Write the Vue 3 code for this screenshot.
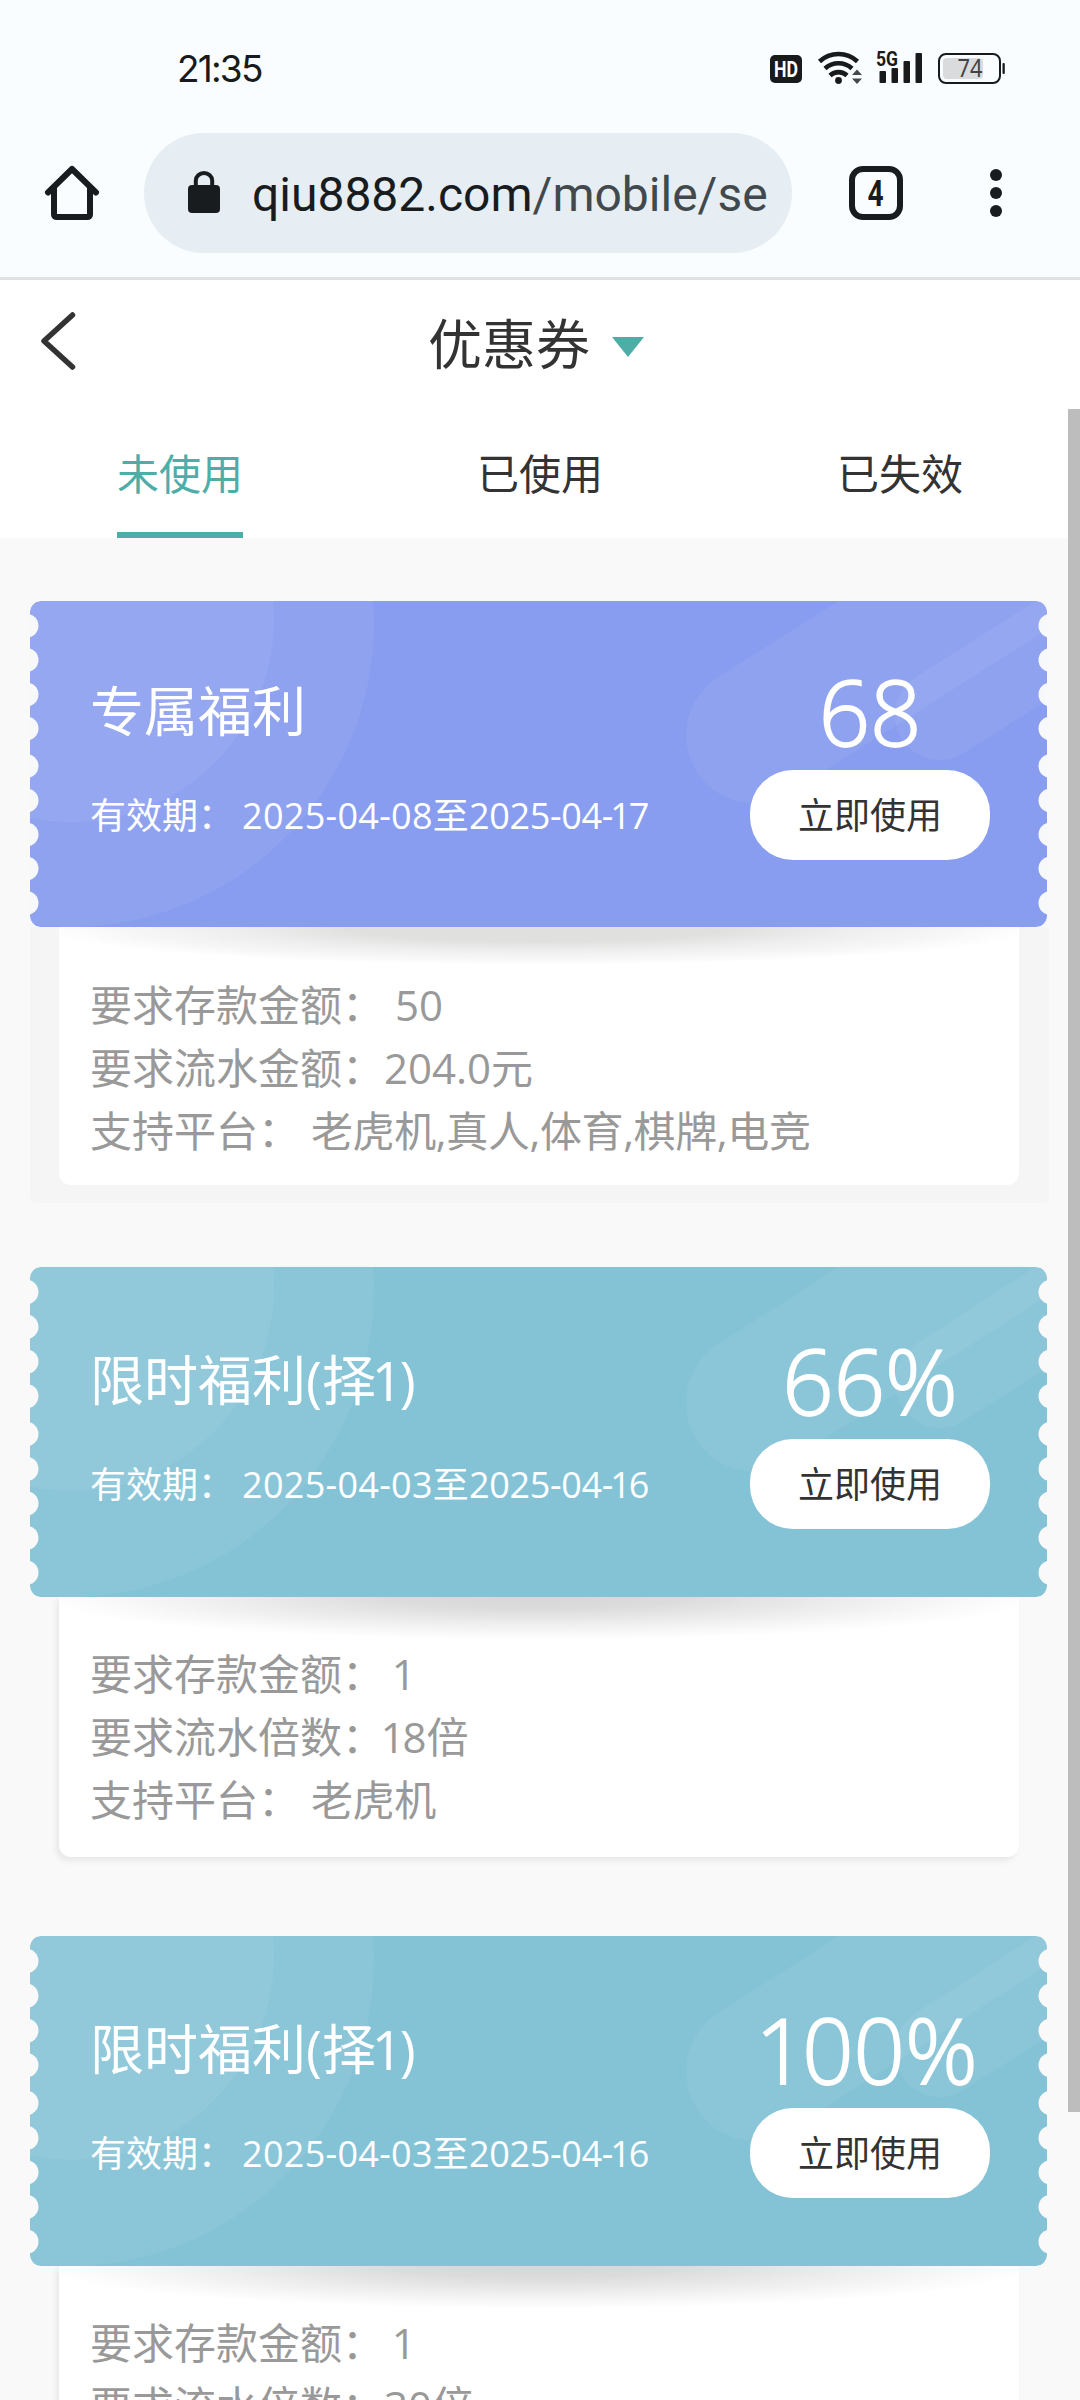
<script setup>
const tabs = ['未使用', '已使用', '已失效']
const notches = [24.7, 59, 93.5, 127.5, 165, 199.5, 233.5, 267.5, 302]
// Splits a string so that each "1" can be set tighter than the other digits.
const glyphs = (s) => s.split(/(1)/).filter(Boolean)
const coupons = [
  {
    theme: 'violet', title: '专属福利', from: '2025-04-08', to: '2025-04-17', value: '68',
    rows: [['要求存款金额：', '50', '', true], ['要求流水金额：', '204.0', '元', false], ['支持平台：', '', '老虎机,真人,体育,棋牌,电竞', true]],
  },
  {
    theme: 'aqua', title: '限时福利(择1)', from: '2025-04-03', to: '2025-04-16', value: '66%',
    rows: [['要求存款金额：', '1', '', true], ['要求流水倍数：', '18', '倍', false], ['支持平台：', '', '老虎机', true]],
  },
  {
    theme: 'aqua', title: '限时福利(择1)', from: '2025-04-03', to: '2025-04-16', value: '100%',
    rows: [['要求存款金额：', '1', '', true], ['要求流水倍数：', '30', '倍', false], ['支持平台：', '', '老虎机', true]],
  },
]
</script>

<template>
  <div class="screen">
    <div class="browser">
      <div class="status">
        <span class="time">21:35</span>
        <svg class="indicators" width="240" height="50" viewBox="768 44 240 50">
          <rect x="770" y="55" width="32" height="28" rx="5" fill="#181a1b" />
          <text x="786" y="77" class="hd" text-anchor="middle" textLength="24" lengthAdjust="spacingAndGlyphs">HD</text>
          <g fill="none" stroke="#181a1b" stroke-width="4.600">
            <path d="M819.500 61.500a28 28 0 0 1 38 0" />
            <path d="M825 68.500a20 20 0 0 1 27 0" />
            <path d="M830 75.500a12.500 12.500 0 0 1 17 0" />
          </g>
          <circle cx="838.500" cy="80.500" r="3.400" fill="#181a1b" />
          <path d="M852 75l5-5.500 5 5.500zM852 78.500h10l-5 5.500z" fill="#444849" />
          <text x="876" y="66" class="fiveg" textLength="22" lengthAdjust="spacingAndGlyphs">5G</text>
          <g fill="#181a1b">
            <rect x="879.500" y="71" width="6.500" height="12" rx="1" />
            <rect x="891.500" y="68" width="6.500" height="15" rx="1" />
            <rect x="903.500" y="61" width="6.500" height="22" rx="1" />
            <rect x="915.500" y="53" width="6.500" height="30" rx="1" />
          </g>
          <rect x="943" y="58" width="40" height="21" rx="4" fill="#dadbdc" />
          <rect x="939" y="54" width="61" height="29" rx="7" fill="none" stroke="#181a1b" stroke-width="2" />
          <rect x="1002.500" y="63" width="2.300" height="11" rx="1" fill="#181a1b" />
          <text x="957.500" y="77.300" class="batt" textLength="25" lengthAdjust="spacingAndGlyphs">74</text>
        </svg>
      </div>
      <div class="toolbar">
        <svg class="home" width="56" height="56" viewBox="0 0 56 56">
          <path d="M4 27.500L28 4l24 23.500M10 23v26.500a2.500 2.500 0 0 0 2.500 2.500h31a2.500 2.500 0 0 0 2.500-2.500V23" fill="none" stroke="#181c1e" stroke-width="6" stroke-linecap="round" stroke-linejoin="round" />
        </svg>
        <div class="address">
          <svg width="32" height="42" viewBox="0 0 32 42">
            <rect y="14" width="32" height="28" rx="4" fill="#181c1e" />
            <path d="M7.800 16v-6.500a8.200 7.500 0 0 1 16.400 0V16" fill="none" stroke="#181c1e" stroke-width="4" />
          </svg>
          <span class="url">qiu8882.com<em>/mobile/se</em></span>
        </div>
        <div class="count"><span>4</span></div>
        <svg class="more" width="12" height="48" viewBox="0 0 12 48" fill="#181c1e">
          <circle cx="6" cy="6" r="6" /><circle cx="6" cy="24" r="6" /><circle cx="6" cy="42" r="6" />
        </svg>
      </div>
    </div>

    <header class="nav">
      <svg class="back" width="36" height="58" viewBox="0 0 36 58">
        <path d="M31.500 3L3 29l28.500 26" fill="none" stroke="#333" stroke-width="5.500" stroke-linecap="round" stroke-linejoin="round" />
      </svg>
      <h1>优惠券</h1>
      <svg class="caret" width="32" height="20" viewBox="0 0 32 20"><path d="M0 0h32L16 20z" fill="#4fada7" /></svg>
    </header>

    <nav class="tabs">
      <div v-for="(t, i) in tabs" :key="t" class="tab"><span :class="{ active: i === 0 }">{{ t }}</span></div>
    </nav>

    <main class="list">
      <article v-for="(c, i) in coupons" :key="i" class="coupon" :class="c.theme">
        <section class="ticket">
          <svg class="art" viewBox="0 0 1017 326" preserveAspectRatio="none">
            <rect class="paper" width="1017" height="326" rx="11" />
            <circle cx="42" cy="19" r="202" fill="#fff" fill-opacity=".06" />
            <circle cx="40" cy="22" r="304" fill="#fff" fill-opacity=".06" />
            <g fill="none" stroke="#fff" stroke-opacity=".06" stroke-linecap="round">
              <path d="M724 134l424-269" stroke-width="136" />
              <path d="M910 114l424-269" stroke-width="90" />
            </g>
            <g class="hole">
              <path d="M0 0h11a11 11 0 0 0-11 11zM1017 0v11a11 11 0 0 0-11-11zM0 326v-11a11 11 0 0 0 11 11zM1017 326h-11a11 11 0 0 0 11-11z" />
              <template v-for="y in notches" :key="y">
                <circle cx="-3.500" :cy="y" r="12" /><circle cx="1020.500" :cy="y" r="12" />
              </template>
            </g>
          </svg>
          <div class="info">
            <h2><span v-for="(g, k) in glyphs(c.title)" :key="k" :class="{ one: g === '1' }">{{ g }}</span></h2>
            <p>有效期：<span class="date">{{ c.from }}</span>至<span class="until"><span v-for="(g, k) in glyphs(c.to)" :key="k" :class="{ one: g === '1' }">{{ g }}</span></span></p>
          </div>
          <div class="action">
            <strong><span v-for="(g, k) in glyphs(c.value)" :key="k" :class="{ one: g === '1' }">{{ g }}</span></strong>
            <button>立即使用</button>
          </div>
        </section>
        <section class="below">
          <div class="panel">
            <p v-for="r in c.rows" :key="r[0]">{{ r[0] }}<span :class="{ gap: r[3] }"><span v-for="(g, k) in glyphs(r[1])" :key="k" :class="{ one: g === '1' }">{{ g }}</span></span><span :class="{ platforms: !r[1] }">{{ r[2] }}</span></p>
          </div>
        </section>
      </article>
    </main>
    <div class="scrollbar"></div>
  </div>
</template>

<style>
body { margin: 0; background: #f9f9f9; }
</style>

<style scoped>
* { box-sizing: border-box; }
h1, h2, p { margin: 0; font-weight: 400; white-space: nowrap; }
.screen {
  position: relative; width: 1080px; height: 2400px; overflow: hidden; background: #f9f9f9; color: #333;
  font-family: "Open Sans", "Noto Sans CJK SC", sans-serif; font-weight: 400;
}
.browser { height: 280px; background: #fafdff; border-bottom: 3px solid #dde3e4; }
.status { height: 133px; padding: 5px 72px 0 177px; display: flex; align-items: center; justify-content: space-between; }
.time { font: 400 37px/40px Inter, sans-serif; letter-spacing: -1.800px; color: #181a1b; }
.hd { font: 700 22px Roboto, sans-serif; fill: #fff; }
.fiveg { font: 700 21px Roboto, sans-serif; fill: #181a1b; }
.batt { font: 400 25px "Noto Sans", sans-serif; fill: #444; }
.toolbar { height: 120px; display: flex; align-items: center; padding-left: 44px; }
.address { width: 648px; height: 120px; margin-left: 44px; padding-left: 44px; border-radius: 60px; background: #e6eef4; display: flex; align-items: center; }
.address svg { margin-top: -2px; }
.url { margin: 3px 0 0 32px; font: 400 48px/60px Roboto, sans-serif; color: #181c1e; }
.url em { font-style: normal; color: #42494d; }
.count { width: 54px; height: 54px; margin-left: 57px; border: 6px solid #181c1e; border-radius: 14px; font: 700 37px/44px "Roboto", sans-serif; text-align: center; color: #181c1e; }
.count span { display: inline-block; transform: scaleX(.76); }
.more { margin-left: 87px; }
.nav { height: 129px; background: #fff; display: flex; align-items: flex-start; }
.back { margin: 32px 0 0 41px; }
.nav h1 { margin: 24px 0 0 351px; width: 162px; font-size: 54px; line-height: 80px; }
.caret { margin: 57px 0 0 22px; }
.tabs { height: 129px; background: #fff; display: flex; }
.tab { flex: 1; display: flex; justify-content: center; }
.tab span { height: 129px; font-size: 42px; line-height: 130px; }
.tab .active { color: #4fada7; border-bottom: 6px solid #4fada7; }
.list { padding-top: 60px; }
.coupon { height: 669px; --hole: #f9f9f9; }
.violet { --paper: #889df0; --hole: #f7f8fa; --art-height: 326px; }
.aqua { --paper: #84c3d6; --art-height: 330px; }
.ticket { position: relative; height: 329px; margin: 0 33px 0 30px; display: flex; justify-content: space-between; color: #fff; z-index: 1; }
.art { position: absolute; left: 0; bottom: 0; width: 1017px; height: var(--art-height); }
.aqua .art { bottom: -1px; }
.paper { fill: var(--paper); }
.hole { fill: var(--hole); }
.info, .action { position: relative; }
.info { padding: 73px 0 0 60px; }
.info h2 { font-size: 54px; line-height: 80px; }
.info p { margin-top: 35px; font-size: 36px; line-height: 60px; }
.date { margin-left: 8px; letter-spacing: .3px; }
.until { letter-spacing: -.3px; }
.one { margin: 0 -.05em 0 -.08em; }
.action { width: 240px; margin-right: 57px; padding-top: 61px; display: flex; flex-direction: column; align-items: center; }
.action strong { font-size: 90px; line-height: 105px; height: 111px; font-weight: 300; white-space: nowrap; -webkit-text-stroke: 1.800px #fff; }
.action button { width: 240px; height: 90px; padding: 2px 0 0; border: 0; border-radius: 43px; background: #fff; color: #333; font: 400 36px/88px "Open Sans", "Noto Sans CJK SC", sans-serif; }
.below { height: 276px; margin: 0 31px 0 30px; padding-left: 29px; }
.violet .below { background: #f5f5f5; border-radius: 0 0 6px 6px; }
.panel {
  width: 960px; height: 261px; padding: 46px 0 0 31px; border-radius: 0 0 12px 12px; color: #999; font-size: 42px; line-height: 63px;
  background: radial-gradient(ellipse 500px 44px at 50% 0, #d6d6d6 0, #dcdcdc 30%, #ededed 62%, #f8f8f8 84%, #fff 100%) #fff;
  box-shadow: -3px 4px 6px rgba(0, 0, 0, .07);
}
.violet .panel {
  height: 258px; box-shadow: none;
  background: radial-gradient(ellipse 500px 38px at 50% 0, #e0e0df 0, #e0e0df 38%, #eee 62%, #f6f6f6 82%, #fff 100%) #fff;
}
.gap { margin-left: 11px; }
.platforms { letter-spacing: -.400px; }
.scrollbar { position: absolute; top: 409px; right: 0; width: 12px; height: 1703px; background: #bdbdbd; }
</style>
